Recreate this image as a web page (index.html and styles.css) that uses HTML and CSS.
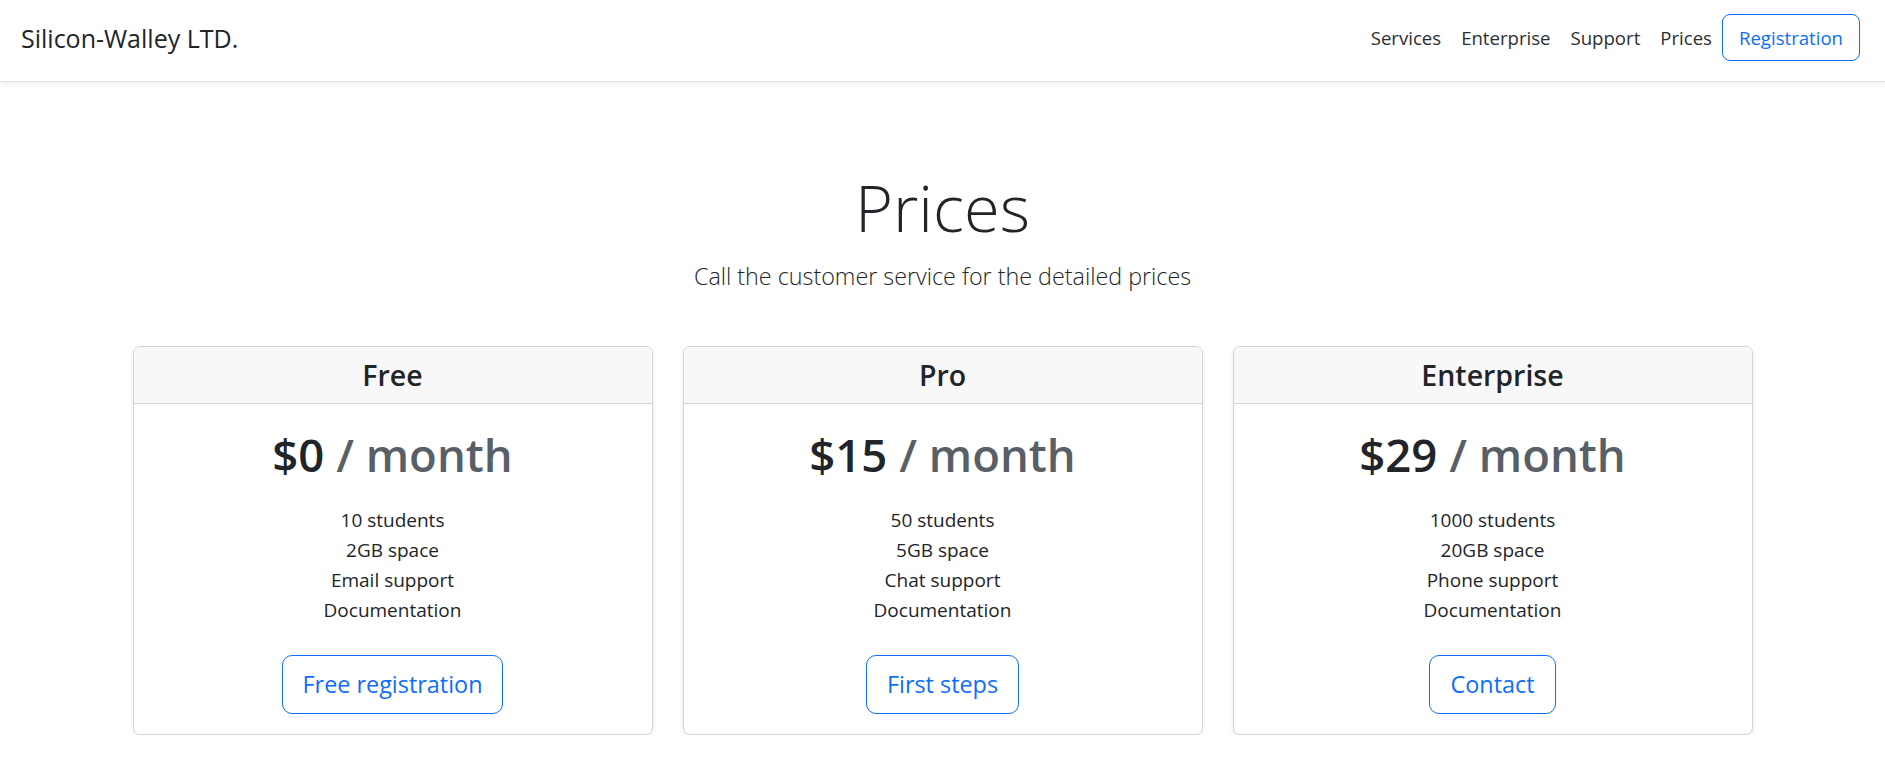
FILE: index.html
```html
<!DOCTYPE html>
<html lang="en">
<head>
<meta charset="utf-8">
<title>Prices - Silicon-Walley LTD.</title>
<link rel="stylesheet" href="styles.css">
</head>
<body>
<header class="topbar">
  <div class="brand">Silicon-Walley LTD.</div>
  <nav class="nav">
    <a class="nav-link" href="#">Services</a>
    <a class="nav-link" href="#">Enterprise</a>
    <a class="nav-link" href="#">Support</a>
    <a class="nav-link" href="#">Prices</a>
    <a class="btn-outline nav-btn" href="#">Registration</a>
  </nav>
</header>

<main class="main">
  <section class="pricing-header">
    <h1 class="display">Prices</h1>
    <p class="lead">Call the customer service for the detailed prices</p>
  </section>

  <section class="cards">
    <div class="card">
      <div class="card-header"><h4 class="card-name">Free</h4></div>
      <div class="card-body">
        <h2 class="price">$0 <span class="per">/ month</span></h2>
        <ul class="features">
          <li>10 students</li>
          <li>2GB space</li>
          <li>Email support</li>
          <li>Documentation</li>
        </ul>
        <a class="btn-outline btn-lg" href="#">Free registration</a>
      </div>
    </div>
    <div class="card">
      <div class="card-header"><h4 class="card-name">Pro</h4></div>
      <div class="card-body">
        <h2 class="price">$15 <span class="per">/ month</span></h2>
        <ul class="features">
          <li>50 students</li>
          <li>5GB space</li>
          <li>Chat support</li>
          <li>Documentation</li>
        </ul>
        <a class="btn-outline btn-lg" href="#">First steps</a>
      </div>
    </div>
    <div class="card">
      <div class="card-header"><h4 class="card-name">Enterprise</h4></div>
      <div class="card-body">
        <h2 class="price">$29 <span class="per">/ month</span></h2>
        <ul class="features">
          <li>1000 students</li>
          <li>20GB space</li>
          <li>Phone support</li>
          <li>Documentation</li>
        </ul>
        <a class="btn-outline btn-lg" href="#">Contact</a>
      </div>
    </div>
  </section>
</main>
</body>
</html>
```

FILE: styles.css
```css
* { box-sizing: border-box; }

html, body {
  margin: 0;
  padding: 0;
  background: #fff;
}

body {
  font-family: "Open Sans", "Noto Sans", "Liberation Sans", sans-serif;
  font-size: 19px;
  line-height: 30px;
  color: #212529;
  overflow: hidden;
}

.topbar {
  display: flex;
  align-items: center;
  justify-content: space-between;
  height: 82px;
  padding: 0 25px 6px 21px;
  background: #fff;
  border-bottom: 1px solid #dee2e6;
  box-shadow: 0 2px 5px rgba(0, 0, 0, 0.075);
  position: relative;
  z-index: 1;
}

.brand {
  font-size: 25px;
  line-height: 36px;
  color: #212529;
}

.nav {
  display: flex;
  align-items: center;
}

.nav-link {
  color: #2b3035;
  text-decoration: none;
  font-size: 18.6px;
  line-height: 30px;
  margin-right: 20px;
}

.nav-link:nth-child(4) { margin-right: 10px; }

.btn-outline {
  display: inline-block;
  color: #0d6efd;
  border: 1px solid #0d6efd;
  text-decoration: none;
  background: transparent;
  text-align: center;
}

.nav-btn {
  font-size: 18.6px;
  line-height: 45px;
  padding: 0 16px;
  border-radius: 8px;
}

.pricing-header {
  text-align: center;
  padding-top: 83px;
}

.display {
  margin: 0 0 9px;
  font-size: 65px;
  line-height: 84px;
  font-weight: 300;
  color: #212529;
}

.lead {
  margin: 0;
  font-size: 23.3px;
  line-height: 37.5px;
  font-weight: 300;
  color: #212529;
}

.cards {
  display: grid;
  grid-template-columns: repeat(3, 1fr);
  column-gap: 30px;
  width: 1620px;
  margin: 50px auto 0;
}

.card {
  border: 1px solid #d4d4d4;
  border-radius: 7px;
  background: #fff;
  box-shadow: 0 2px 5px rgba(0, 0, 0, 0.075);
  overflow: hidden;
  text-align: center;
}

.card-header {
  background: #f8f8f8;
  border-bottom: 1px solid #d4d4d4;
  padding: 10px 20px;
}

.card-name {
  margin: 0;
  font-size: 28.5px;
  line-height: 36px;
  font-weight: 600;
  color: #212529;
}

.card-body {
  padding: 20px 20px 20px;
}

.price {
  margin: 0;
  font-size: 45.5px;
  line-height: 60px;
  font-weight: 600;
  color: #212529;
}

.per {
  color: #595f66;
}

.features {
  list-style: none;
  margin: 21px 0 30px;
  padding: 0;
  font-size: 19px;
  line-height: 30px;
  color: #212529;
}

.btn-lg {
  font-size: 23.4px;
  line-height: 37.5px;
  padding: 10px 20px;
  border-radius: 10px;
}
```
